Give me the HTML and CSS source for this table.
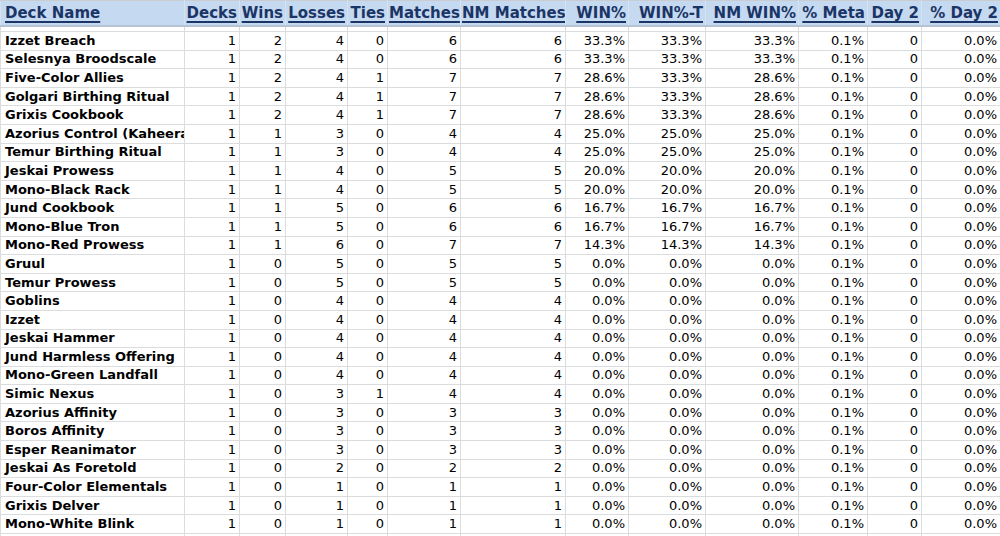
FILE: index.html
```html
<!DOCTYPE html>
<html>
<head>
<meta charset="utf-8">
<link rel="stylesheet" href="styles.css">
</head>
<body>
<table class="sheet">
<colgroup>
<col class="c-name"><col class="c-decks"><col class="c-wins"><col class="c-losses"><col class="c-ties"><col class="c-matches"><col class="c-nm"><col class="c-win"><col class="c-wint"><col class="c-nmwin"><col class="c-meta"><col class="c-day2"><col class="c-pday2">
</colgroup>
<thead>
<tr class="head">
<th class="left">Deck Name</th><th>Decks</th><th>Wins</th><th>Losses</th><th>Ties</th><th>Matches</th><th>NM Matches</th><th>WIN%</th><th>WIN%-T</th><th>NM WIN%</th><th>% Meta</th><th>Day 2</th><th>% Day 2</th>
</tr>
</thead>
<tbody>
<tr class="sliver"><td></td><td></td><td></td><td></td><td></td><td></td><td></td><td></td><td></td><td></td><td></td><td></td><td></td></tr>
<tr><td class="name">Izzet Breach</td><td>1</td><td>2</td><td>4</td><td>0</td><td>6</td><td>6</td><td>33.3%</td><td>33.3%</td><td>33.3%</td><td>0.1%</td><td>0</td><td>0.0%</td></tr>
<tr><td class="name">Selesnya Broodscale</td><td>1</td><td>2</td><td>4</td><td>0</td><td>6</td><td>6</td><td>33.3%</td><td>33.3%</td><td>33.3%</td><td>0.1%</td><td>0</td><td>0.0%</td></tr>
<tr><td class="name">Five-Color Allies</td><td>1</td><td>2</td><td>4</td><td>1</td><td>7</td><td>7</td><td>28.6%</td><td>33.3%</td><td>28.6%</td><td>0.1%</td><td>0</td><td>0.0%</td></tr>
<tr><td class="name">Golgari Birthing Ritual</td><td>1</td><td>2</td><td>4</td><td>1</td><td>7</td><td>7</td><td>28.6%</td><td>33.3%</td><td>28.6%</td><td>0.1%</td><td>0</td><td>0.0%</td></tr>
<tr><td class="name">Grixis Cookbook</td><td>1</td><td>2</td><td>4</td><td>1</td><td>7</td><td>7</td><td>28.6%</td><td>33.3%</td><td>28.6%</td><td>0.1%</td><td>0</td><td>0.0%</td></tr>
<tr><td class="name">Azorius Control (Kaheera)</td><td>1</td><td>1</td><td>3</td><td>0</td><td>4</td><td>4</td><td>25.0%</td><td>25.0%</td><td>25.0%</td><td>0.1%</td><td>0</td><td>0.0%</td></tr>
<tr><td class="name">Temur Birthing Ritual</td><td>1</td><td>1</td><td>3</td><td>0</td><td>4</td><td>4</td><td>25.0%</td><td>25.0%</td><td>25.0%</td><td>0.1%</td><td>0</td><td>0.0%</td></tr>
<tr><td class="name">Jeskai Prowess</td><td>1</td><td>1</td><td>4</td><td>0</td><td>5</td><td>5</td><td>20.0%</td><td>20.0%</td><td>20.0%</td><td>0.1%</td><td>0</td><td>0.0%</td></tr>
<tr><td class="name">Mono-Black Rack</td><td>1</td><td>1</td><td>4</td><td>0</td><td>5</td><td>5</td><td>20.0%</td><td>20.0%</td><td>20.0%</td><td>0.1%</td><td>0</td><td>0.0%</td></tr>
<tr><td class="name">Jund Cookbook</td><td>1</td><td>1</td><td>5</td><td>0</td><td>6</td><td>6</td><td>16.7%</td><td>16.7%</td><td>16.7%</td><td>0.1%</td><td>0</td><td>0.0%</td></tr>
<tr><td class="name">Mono-Blue Tron</td><td>1</td><td>1</td><td>5</td><td>0</td><td>6</td><td>6</td><td>16.7%</td><td>16.7%</td><td>16.7%</td><td>0.1%</td><td>0</td><td>0.0%</td></tr>
<tr><td class="name">Mono-Red Prowess</td><td>1</td><td>1</td><td>6</td><td>0</td><td>7</td><td>7</td><td>14.3%</td><td>14.3%</td><td>14.3%</td><td>0.1%</td><td>0</td><td>0.0%</td></tr>
<tr><td class="name">Gruul</td><td>1</td><td>0</td><td>5</td><td>0</td><td>5</td><td>5</td><td>0.0%</td><td>0.0%</td><td>0.0%</td><td>0.1%</td><td>0</td><td>0.0%</td></tr>
<tr><td class="name">Temur Prowess</td><td>1</td><td>0</td><td>5</td><td>0</td><td>5</td><td>5</td><td>0.0%</td><td>0.0%</td><td>0.0%</td><td>0.1%</td><td>0</td><td>0.0%</td></tr>
<tr><td class="name">Goblins</td><td>1</td><td>0</td><td>4</td><td>0</td><td>4</td><td>4</td><td>0.0%</td><td>0.0%</td><td>0.0%</td><td>0.1%</td><td>0</td><td>0.0%</td></tr>
<tr><td class="name">Izzet</td><td>1</td><td>0</td><td>4</td><td>0</td><td>4</td><td>4</td><td>0.0%</td><td>0.0%</td><td>0.0%</td><td>0.1%</td><td>0</td><td>0.0%</td></tr>
<tr><td class="name">Jeskai Hammer</td><td>1</td><td>0</td><td>4</td><td>0</td><td>4</td><td>4</td><td>0.0%</td><td>0.0%</td><td>0.0%</td><td>0.1%</td><td>0</td><td>0.0%</td></tr>
<tr><td class="name">Jund Harmless Offering</td><td>1</td><td>0</td><td>4</td><td>0</td><td>4</td><td>4</td><td>0.0%</td><td>0.0%</td><td>0.0%</td><td>0.1%</td><td>0</td><td>0.0%</td></tr>
<tr><td class="name">Mono-Green Landfall</td><td>1</td><td>0</td><td>4</td><td>0</td><td>4</td><td>4</td><td>0.0%</td><td>0.0%</td><td>0.0%</td><td>0.1%</td><td>0</td><td>0.0%</td></tr>
<tr><td class="name">Simic Nexus</td><td>1</td><td>0</td><td>3</td><td>1</td><td>4</td><td>4</td><td>0.0%</td><td>0.0%</td><td>0.0%</td><td>0.1%</td><td>0</td><td>0.0%</td></tr>
<tr><td class="name">Azorius Affinity</td><td>1</td><td>0</td><td>3</td><td>0</td><td>3</td><td>3</td><td>0.0%</td><td>0.0%</td><td>0.0%</td><td>0.1%</td><td>0</td><td>0.0%</td></tr>
<tr><td class="name">Boros Affinity</td><td>1</td><td>0</td><td>3</td><td>0</td><td>3</td><td>3</td><td>0.0%</td><td>0.0%</td><td>0.0%</td><td>0.1%</td><td>0</td><td>0.0%</td></tr>
<tr><td class="name">Esper Reanimator</td><td>1</td><td>0</td><td>3</td><td>0</td><td>3</td><td>3</td><td>0.0%</td><td>0.0%</td><td>0.0%</td><td>0.1%</td><td>0</td><td>0.0%</td></tr>
<tr><td class="name">Jeskai As Foretold</td><td>1</td><td>0</td><td>2</td><td>0</td><td>2</td><td>2</td><td>0.0%</td><td>0.0%</td><td>0.0%</td><td>0.1%</td><td>0</td><td>0.0%</td></tr>
<tr><td class="name">Four-Color Elementals</td><td>1</td><td>0</td><td>1</td><td>0</td><td>1</td><td>1</td><td>0.0%</td><td>0.0%</td><td>0.0%</td><td>0.1%</td><td>0</td><td>0.0%</td></tr>
<tr><td class="name">Grixis Delver</td><td>1</td><td>0</td><td>1</td><td>0</td><td>1</td><td>1</td><td>0.0%</td><td>0.0%</td><td>0.0%</td><td>0.1%</td><td>0</td><td>0.0%</td></tr>
<tr><td class="name">Mono-White Blink</td><td>1</td><td>0</td><td>1</td><td>0</td><td>1</td><td>1</td><td>0.0%</td><td>0.0%</td><td>0.0%</td><td>0.1%</td><td>0</td><td>0.0%</td></tr>
<tr class="tail"><td></td><td></td><td></td><td></td><td></td><td></td><td></td><td></td><td></td><td></td><td></td><td></td><td></td></tr>
</tbody>
</table>
</body>
</html>
```
FILE: styles.css
```css
html, body {
  margin: 0;
  padding: 0;
  background: #ffffff;
  overflow: hidden;
}
body {
  font-family: "DejaVu Sans", Verdana, sans-serif;
  color: #000000;
}
.sheet {
  table-layout: fixed;
  border-collapse: collapse;
  width: 1000px;
}
.c-name { width: 184px; }
.c-decks { width: 55px; }
.c-wins { width: 46px; }
.c-losses { width: 62px; }
.c-ties { width: 40px; }
.c-matches { width: 73px; }
.c-nm { width: 105px; }
.c-win { width: 63px; }
.c-wint { width: 77px; }
.c-nmwin { width: 93px; }
.c-meta { width: 69px; }
.c-day2 { width: 54px; }
.c-pday2 { width: 79px; }

.head th {
  height: 24px;
  padding: 0 2px 0 1px;
  background: #c5d9f1;
  color: #1b3566;
  font-size: 15px;
  font-weight: bold;
  text-decoration: underline;
  text-decoration-thickness: 2px;
  text-underline-offset: 3px;
  text-align: right;
  white-space: nowrap;
  overflow: hidden;
  border-top: 1px solid #c9ccd1;
  border-left: 1px solid #d7e2f0;
  border-right: 1px solid #d7e2f0;
  border-bottom: 2px solid #b7c3d3;
}
.head th.left { text-align: left; padding-left: 4px; }

td {
  height: 17.6px;
  padding: 0 3px 0 3px;
  font-size: 13px;
  text-align: right;
  white-space: nowrap;
  overflow: hidden;
  border: 1px solid #dadcdd;
  line-height: 16px;
}
td.name {
  text-align: left;
  font-weight: bold;
  padding-left: 4px;
  text-overflow: clip;
}
.sliver td {
  height: 4px;
  padding: 0;
  border-top: 1px solid #eeeeee;
}
.tail td { height: 6px; }
```
